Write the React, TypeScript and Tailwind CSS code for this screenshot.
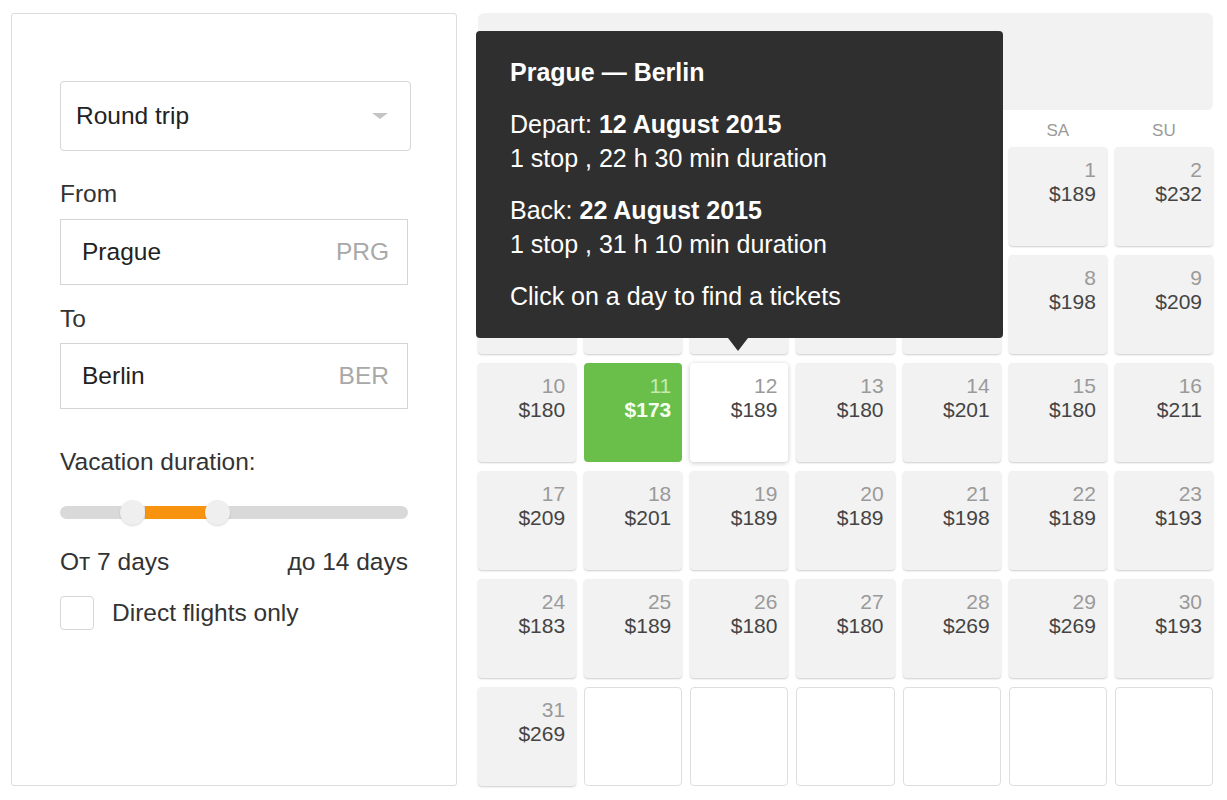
import React from "react"

type Day = { d: number; p: number } | null

const weeks: Day[][] = [
    [null, null, null, null, null, { d: 1, p: 189 }, { d: 2, p: 232 }],
    [{ d: 3, p: 198 }, { d: 4, p: 189 }, { d: 5, p: 180 }, { d: 6, p: 201 }, { d: 7, p: 189 }, { d: 8, p: 198 }, { d: 9, p: 209 }],
    [{ d: 10, p: 180 }, { d: 11, p: 173 }, { d: 12, p: 189 }, { d: 13, p: 180 }, { d: 14, p: 201 }, { d: 15, p: 180 }, { d: 16, p: 211 }],
    [{ d: 17, p: 209 }, { d: 18, p: 201 }, { d: 19, p: 189 }, { d: 20, p: 189 }, { d: 21, p: 198 }, { d: 22, p: 189 }, { d: 23, p: 193 }],
    [{ d: 24, p: 183 }, { d: 25, p: 189 }, { d: 26, p: 180 }, { d: 27, p: 180 }, { d: 28, p: 269 }, { d: 29, p: 269 }, { d: 30, p: 193 }],
    [{ d: 31, p: 269 }, null, null, null, null, null, null],
]

const weekdays = ["MO", "TU", "WE", "TH", "FR", "SA", "SU"]

const DayCell = ({ day }: { day: Day }) => {
    if (!day) {
        return <div className="h-[99px] rounded-[4px] border border-[#dedede] bg-white" />
    }
    const cheapest = day.d === 11
    const hovered = day.d === 12
    const bg = cheapest
        ? "bg-[#6abf4b]"
        : hovered
            ? "bg-white shadow-[0_1px_5px_rgba(0,0,0,0.22)]"
            : "bg-[#f2f2f2] shadow-[0_1px_2px_rgba(0,0,0,0.2)]"
    return (
        <div className={`h-[99px] rounded-[4px] ${bg} flex flex-col items-end pt-[11px] pr-[11px] text-[21px] leading-[24px]`}>
            <span className={cheapest ? "text-[#c4ebb0]" : "text-[#9a9a9a]"}>{day.d}</span>
            <span className={cheapest ? "font-bold text-[#f4fff0]" : "text-[#444]"}>${day.p}</span>
        </div>
    )
}

const Field = ({ city, code }: { city: string; code: string }) => (
    <div className="h-[66px] w-[348px] border border-[#d4d4d4] flex items-center justify-between pl-[21px] pr-[18px]">
        <span className="text-[#222]">{city}</span>
        <span className="text-[#a8a8a8]">{code}</span>
    </div>
)

export default function App() {
    return (
        <div className="w-[1227px] h-[800px] bg-white flex items-start pt-[13px] pl-[11px] gap-[21px] font-['Liberation_Sans',Arial,sans-serif]">

            {/* Search form */}
            <div className="w-[446px] h-[773px] border border-[#dcdcdc] rounded-[3px] pl-[48px] pt-[67px] text-[24.5px] leading-[28px] text-[#333]">
                <div className="h-[70px] w-[351px] border border-[#d6d6d6] rounded-[4px] flex items-center justify-between pl-[15px] pr-[22px]">
                    <span className="text-[#222]">Round trip</span>
                    <span className="w-0 h-0 border-l-[8px] border-r-[8px] border-t-[6px] border-l-transparent border-r-transparent border-t-[#c4c4c4]" />
                </div>

                <div className="mt-[29px]">From</div>
                <div className="mt-[11px]"><Field city="Prague" code="PRG" /></div>

                <div className="mt-[20px]">To</div>
                <div className="mt-[10px]"><Field city="Berlin" code="BER" /></div>

                <div className="mt-[39px]">Vacation duration:</div>

                {/* Range slider */}
                <div className="relative mt-[24px] h-[25px] w-[348px] flex items-center">
                    <div className="h-[13px] w-full rounded-full bg-[#d9d9d9]" />
                    <div className="absolute left-[85px] top-[6px] h-[13px] w-[62px] bg-[#f7930f]" />
                    <div className="absolute left-[60px] top-0 w-[25px] h-[25px] rounded-full bg-[#efefef] shadow-[0_1px_2px_rgba(0,0,0,0.15)]" />
                    <div className="absolute left-[145px] top-0 w-[25px] h-[25px] rounded-full bg-[#efefef] shadow-[0_1px_2px_rgba(0,0,0,0.15)]" />
                </div>

                <div className="mt-[23px] w-[348px] flex justify-between">
                    <span>От 7 days</span>
                    <span>до 14 days</span>
                </div>

                <label className="mt-[20px] flex items-center gap-[18px]">
                    <span className="w-[34px] h-[34px] rounded-[4px] border border-[#d6d6d6] bg-white" />
                    <span>Direct flights only</span>
                </label>
            </div>

            {/* Price calendar */}
            <div className="relative w-[735px]">
                <div className="h-[97px] rounded-[6px] bg-[#f2f2f2] flex items-center justify-center text-[22px] text-[#555]">
                    August 2015
                </div>
                <div className="grid grid-cols-7 gap-x-2 h-[37px] items-center pt-[4px] text-[17px] text-[#9a9a9a]">
                    {weekdays.map((w) => (
                        <div key={w} className="text-center">{w}</div>
                    ))}
                </div>
                <div className="grid grid-cols-7 gap-x-2 gap-y-[9px]">
                    {weeks.flat().map((day, i) => (
                        <DayCell key={i} day={day} />
                    ))}
                </div>

                {/* Tooltip */}
                <div className="absolute left-[-2px] top-[18px] w-[527px] h-[307px] rounded-[4px] bg-[#2f2f2f] text-white text-[25px] leading-[34px] pl-[34px] pt-[24px]">
                    <div className="font-bold">Prague — Berlin</div>
                    <div className="mt-[18px]">Depart: <span className="font-bold">12 August 2015</span></div>
                    <div>1 stop , 22 h 30 min duration</div>
                    <div className="mt-[18px]">Back: <span className="font-bold">22 August 2015</span></div>
                    <div>1 stop , 31 h 10 min duration</div>
                    <div className="mt-[18px]">Click on a day to find a tickets</div>
                    <span className="absolute left-[252px] top-full w-0 h-0 border-l-[10px] border-r-[10px] border-t-[13px] border-l-transparent border-r-transparent border-t-[#2f2f2f]" />
                </div>
            </div>
        </div>
    )
}
